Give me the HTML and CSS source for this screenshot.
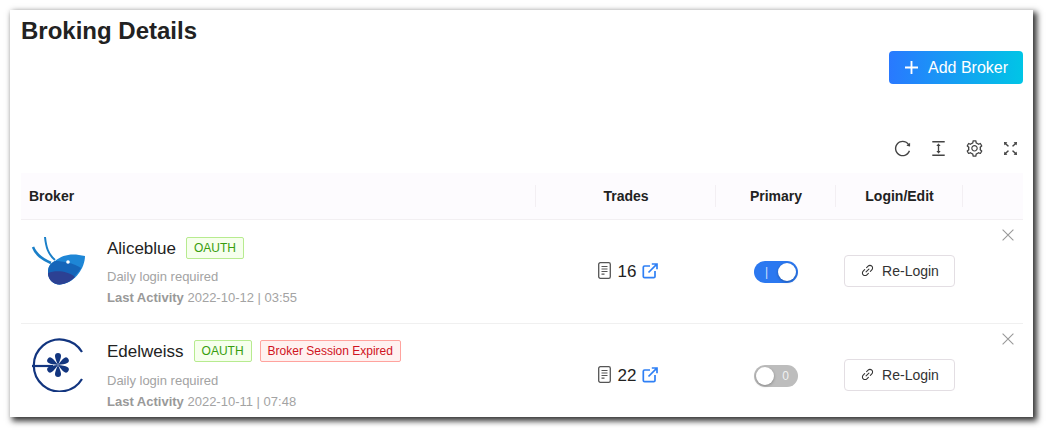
FILE: index.html
```html
<!DOCTYPE html>
<html lang="en">
<head>
    <meta charset="UTF-8">
    <meta name="viewport" content="width=device-width, initial-scale=1.0">
    <title>Broking Details</title>
    <link rel="stylesheet" href="styles.css">
</head>
<body>
    <svg class="sprites" aria-hidden="true">
        <symbol id="i-link" viewBox="0 0 1024 1024">
            <path d="M574 665.4a8.03 8.03 0 0 0-11.3 0L446.5 781.6c-53.8 53.8-144.6 59.5-204 0-59.5-59.5-53.8-150.2 0-204l116.2-116.2c3.1-3.1 3.1-8.2 0-11.3l-39.8-39.8a8.03 8.03 0 0 0-11.3 0L191.4 526.5c-84.6 84.6-84.6 221.5 0 306s221.5 84.6 306 0l116.2-116.2c3.1-3.1 3.1-8.2 0-11.3L574 665.4zm258.6-474c-84.6-84.6-221.5-84.6-306 0L410.3 307.6a8.03 8.03 0 0 0 0 11.3l39.7 39.7c3.1 3.1 8.2 3.1 11.3 0l116.2-116.2c53.8-53.8 144.6-59.5 204 0 59.5 59.5 53.8 150.2 0 204L665.3 562.6a8.03 8.03 0 0 0 0 11.3l39.8 39.8c3.1 3.1 8.2 3.1 11.3 0l116.2-116.2c84.5-84.6 84.5-221.5 0-306.1zM610.1 372.3a8.03 8.03 0 0 0-11.3 0L372.3 598.7a8.03 8.03 0 0 0 0 11.3l39.6 39.6c3.1 3.1 8.2 3.1 11.3 0l226.4-226.4c3.1-3.1 3.1-8.2 0-11.3l-39.5-39.6z"/>
        </symbol>
        <symbol id="i-doc" viewBox="0 0 13 17">
            <rect x=".7" y=".7" width="11.600" height="15.600" rx="1.600" fill="none" stroke="currentColor" stroke-width="1.300"/>
            <path d="M3.500 4.500h6M3.500 7h6M3.500 9.500h6M3.500 12.200h3" fill="none" stroke="currentColor" stroke-width="1.200"/>
        </symbol>
        <symbol id="i-open" viewBox="0 0 16 16">
            <path d="M8 3H2.600A1.300 1.300 0 0 0 1.300 4.300V13.400A1.300 1.300 0 0 0 2.600 14.700H11.700A1.300 1.300 0 0 0 13 13.400V8M6.500 9.500L14.600 1.400M9.800 1H15V6.200" fill="none" stroke="currentColor" stroke-width="1.700"/>
        </symbol>
        <symbol id="i-close" viewBox="0 0 12 12">
            <path d="M.6.600L11.400 11.400M11.400.600L.6 11.400" fill="none" stroke="currentColor" stroke-width="1.100"/>
        </symbol>
        <symbol id="i-petal" viewBox="0 0 60 60" overflow="visible">
            <path d="M31 33C29.500 29.500 28 26 28 24A3 3 0 0 1 34 24C34 26 32.500 29.500 31 33Z"/>
        </symbol>
    </svg>

    <div class="card">
        <h1>Broking Details</h1>

        <div class="actions">
            <button class="add-btn">
                <svg class="add-icon" viewBox="0 0 14 14"><path d="M7 0v14M0 7h14" stroke="#fff" stroke-width="2"/></svg>
                Add Broker
            </button>
        </div>

        <div class="toolbar">
            <svg class="tool" viewBox="0 0 1024 1024"><path d="M909.1 209.3l-56.4 44.1C775.8 155.1 656.2 92 521.9 92 290 92 102.3 279.5 102 511.5 101.7 743.7 289.8 932 521.9 932c181.3 0 335.8-115 394.6-276.1 1.5-4.2-.7-8.9-4.9-10.3l-56.7-19.5a8 8 0 0 0-10.1 4.8c-1.8 5-3.8 10-5.9 14.9-17.3 41-42.1 77.8-73.7 109.4A344.77 344.77 0 0 1 655.9 829c-42.3 17.9-87.4 27-133.8 27-46.5 0-91.5-9.1-133.8-27A341.5 341.5 0 0 1 279 755.2a342.16 342.16 0 0 1-73.7-109.4c-17.9-42.4-27-87.4-27-133.9s9.1-91.5 27-133.9c17.3-41 42.1-77.8 73.7-109.4 31.6-31.6 68.4-56.4 109.3-73.8 42.3-17.9 87.4-27 133.8-27 46.5 0 91.5 9.1 133.8 27a341.5 341.5 0 0 1 109.3 73.8c9.9 9.9 19.2 20.4 27.8 31.4l-60.2 47a8 8 0 0 0 3 14.1l175.6 43c5 1.2 9.9-2.6 9.9-7.7l.8-180.9c-.1-6.6-7.8-10.3-13-6.2z"/></svg>
            <svg class="tool" viewBox="0 0 1024 1024"><path d="M840 836H184c-4.4 0-8 3.6-8 8v60c0 4.4 3.6 8 8 8h656c4.4 0 8-3.6 8-8v-60c0-4.4-3.6-8-8-8zm0-724H184c-4.4 0-8 3.6-8 8v60c0 4.4 3.6 8 8 8h656c4.4 0 8-3.6 8-8v-60c0-4.4-3.6-8-8-8zM610.8 378c6 0 9.4-7 5.7-11.7L515.7 238.7a7.14 7.14 0 0 0-11.3 0L403.6 366.3a7.23 7.23 0 0 0 5.7 11.7H476v268h-62.8c-6 0-9.4 7-5.7 11.7l100.8 127.5c2.9 3.7 8.5 3.7 11.3 0l100.8-127.5c3.7-4.7.4-11.7-5.7-11.7H548V378h62.8z"/></svg>
            <svg class="tool" viewBox="0 0 1024 1024"><path d="M924.8 625.7l-65.5-56c3.1-19 4.7-38.4 4.7-57.8s-1.6-38.8-4.7-57.8l65.5-56a32.03 32.03 0 0 0 9.3-35.2l-.9-2.6a443.74 443.74 0 0 0-79.7-137.9l-1.8-2.1a32.12 32.12 0 0 0-35.1-9.5l-81.3 28.9c-30-24.6-63.5-44-99.7-57.6l-15.7-85a32.05 32.05 0 0 0-25.8-25.7l-2.7-.5c-52.1-9.4-106.9-9.4-159 0l-2.7.5a32.05 32.05 0 0 0-25.8 25.7l-15.8 85.4a351.86 351.86 0 0 0-99 57.4l-81.9-29.1a32 32 0 0 0-35.1 9.5l-1.8 2.1a446.02 446.02 0 0 0-79.7 137.9l-.9 2.6c-4.5 12.5-.8 26.5 9.3 35.2l66.3 56.6c-3.1 18.8-4.6 38-4.6 57.1 0 19.2 1.5 38.4 4.6 57.1L99 625.5a32.03 32.03 0 0 0-9.3 35.2l.9 2.6c18.1 50.4 44.9 96.9 79.7 137.9l1.8 2.1a32.12 32.12 0 0 0 35.1 9.5l81.9-29.1c29.8 24.5 63.1 43.9 99 57.4l15.8 85.4a32.05 32.05 0 0 0 25.8 25.7l2.7.5a449.4 449.4 0 0 0 159 0l2.7-.5a32.05 32.05 0 0 0 25.8-25.7l15.7-85a350 350 0 0 0 99.7-57.6l81.3 28.9a32 32 0 0 0 35.1-9.5l1.8-2.1c34.8-41.1 61.6-87.5 79.7-137.9l.9-2.6c4.5-12.3.8-26.3-9.3-35zM788.3 465.9c2.5 15.1 3.8 30.6 3.8 46.1s-1.3 31-3.8 46.1l-6.6 40.1 74.7 63.9a370.03 370.03 0 0 1-42.6 73.6L721 702.8l-31.4 25.8c-23.9 19.6-50.5 35-79.3 45.8l-38.1 14.3-17.9 97a377.5 377.5 0 0 1-85 0l-17.9-97.2-37.8-14.5c-28.5-10.8-55-26.2-78.7-45.7l-31.4-25.9-93.4 33.2c-17-22.9-31.2-47.6-42.6-73.6l75.5-64.5-6.5-40c-2.4-14.9-3.7-30.3-3.7-45.5 0-15.3 1.2-30.6 3.7-45.5l6.5-40-75.5-64.5c11.3-26.1 25.6-50.7 42.6-73.6l93.4 33.2 31.4-25.9c23.7-19.5 50.2-34.9 78.7-45.7l37.9-14.3 17.9-97.2c28.1-3.2 56.8-3.2 85 0l17.9 97 38.1 14.3c28.7 10.8 55.4 26.2 79.3 45.8l31.4 25.8 92.8-32.9c17 22.9 31.2 47.6 42.6 73.6L781.8 426l6.5 39.9zM512 326c-97.2 0-176 78.8-176 176s78.8 176 176 176 176-78.8 176-176-78.8-176-176-176zm79.2 255.2A111.6 111.6 0 0 1 512 614c-29.9 0-58-11.7-79.2-32.8A111.6 111.6 0 0 1 400 502c0-29.9 11.7-58 32.8-79.2C454 401.6 482.1 390 512 390c29.9 0 58 11.6 79.2 32.8A111.6 111.6 0 0 1 624 502c0 29.9-11.7 58-32.8 79.2z"/></svg>
            <svg class="tool" viewBox="0 0 1024 1024"><path d="M290 236.4l43.9-43.9a8.01 8.01 0 0 0-4.7-13.6L169 160c-5.1-.6-9.5 3.7-8.9 8.9L179 329.1c.8 6.6 8.9 9.4 13.6 4.7l43.7-43.7L370 423.7c3.1 3.1 8.2 3.1 11.3 0l42.4-42.3c3.1-3.1 3.1-8.2 0-11.3L290 236.4zm352.7 187.3c3.1 3.1 8.2 3.1 11.3 0l133.7-133.6 43.7 43.7a8.01 8.01 0 0 0 13.6-4.7L863.9 169c.6-5.1-3.7-9.5-8.9-8.9L694.8 179c-6.6.8-9.4 8.9-4.7 13.6l43.9 43.9L600.3 370a8.03 8.03 0 0 0 0 11.3l42.4 42.4zM845 694.9c-.8-6.6-8.9-9.4-13.6-4.7l-43.7 43.7L654 600.3a8.03 8.03 0 0 0-11.3 0l-42.4 42.3a8.03 8.03 0 0 0 0 11.3L734 787.6l-43.9 43.9a8.01 8.01 0 0 0 4.7 13.6L855 864c5.1.6 9.5-3.7 8.9-8.9L845 694.9zm-463.7-94.6a8.03 8.03 0 0 0-11.3 0L236.3 733.9l-43.7-43.7a8.01 8.01 0 0 0-13.6 4.7L160.1 855c-.6 5.1 3.7 9.5 8.9 8.9L329.2 845c6.6-.8 9.4-8.9 4.7-13.6L290 787.6 423.7 654c3.1-3.1 3.1-8.2 0-11.3l-42.4-42.4z"/></svg>
        </div>

        <div class="table">
            <div class="head">
                <div class="th th-broker">Broker</div>
                <div class="th">Trades</div>
                <div class="th">Primary</div>
                <div class="th">Login/Edit</div>
                <div class="th th-last"></div>
            </div>

            <div class="row row-first">
                <div class="broker">
                    <svg class="logo" viewBox="0 -4 60 60">
                        <path d="M18 5C19 15 21 22 28 28" fill="none" stroke="#1a7fc8" stroke-width="2"/>
                        <path d="M6 15C9 23 15 27 24 31" fill="none" stroke="#1a7fc8" stroke-width="2.500"/>
                        <path d="M21 40C21 34 24 31 28 29C36 22 46 21 58 24C58 36 48 50 36 52C27 54 21 48 21 40Z" fill="#1e86d6"/>
                        <path d="M21 40C21 34 24 31 28 29C36 29 46 31 54 36C49 44 43 50 36 52C27 54 21 48 21 40Z" fill="#1565b9"/>
                        <path d="M21 41C29 38 41 39 48 45C44 49 40 51 36 52C28 54 21 49 21 41Z" fill="#2c4193"/>
                        <circle cx="41" cy="30" r="1.800" fill="#fff"/>
                    </svg>
                    <div class="info">
                        <div class="name-line">
                            <span class="name">Aliceblue</span>
                            <span class="tag tag-green">OAUTH</span>
                        </div>
                        <div class="muted">Daily login required</div>
                        <div class="muted"><b>Last Activity</b> 2022-10-12 | 03:55</div>
                    </div>
                </div>
                <div class="trades">
                    <svg class="doc"><use href="#i-doc"/></svg>
                    <span>16</span>
                    <svg class="open"><use href="#i-open"/></svg>
                </div>
                <div class="primary">
                    <div class="switch switch-on"><span class="switch-label">|</span><span class="knob"></span></div>
                </div>
                <div class="login">
                    <button class="login-btn"><svg class="link"><use href="#i-link"/></svg>Re-Login</button>
                </div>
                <div class="remove"><svg class="close"><use href="#i-close"/></svg></div>
            </div>

            <div class="row">
                <div class="broker">
                    <svg class="logo" viewBox="0 0 60 60">
                        <path d="M55 20A26 26 0 1 0 55 47" fill="none" stroke="#12357f" stroke-width="2.200"/>
                        <path d="M5 34H26" stroke="#12357f" stroke-width="2.200"/>
                        <g fill="#12357f">
                            <use href="#i-petal" width="60" height="60"/>
                            <use href="#i-petal" width="60" height="60" transform="rotate(60 31 33)"/>
                            <use href="#i-petal" width="60" height="60" transform="rotate(120 31 33)"/>
                            <use href="#i-petal" width="60" height="60" transform="rotate(180 31 33)"/>
                            <use href="#i-petal" width="60" height="60" transform="rotate(240 31 33)"/>
                            <use href="#i-petal" width="60" height="60" transform="rotate(300 31 33)"/>
                        </g>
                    </svg>
                    <div class="info">
                        <div class="name-line">
                            <span class="name">Edelweiss</span>
                            <span class="tag tag-green">OAUTH</span>
                            <span class="tag tag-red">Broker Session Expired</span>
                        </div>
                        <div class="muted">Daily login required</div>
                        <div class="muted"><b>Last Activity</b> 2022-10-11 | 07:48</div>
                    </div>
                </div>
                <div class="trades">
                    <svg class="doc"><use href="#i-doc"/></svg>
                    <span>22</span>
                    <svg class="open"><use href="#i-open"/></svg>
                </div>
                <div class="primary">
                    <div class="switch switch-off"><span class="knob"></span><span class="switch-label">0</span></div>
                </div>
                <div class="login">
                    <button class="login-btn"><svg class="link"><use href="#i-link"/></svg>Re-Login</button>
                </div>
                <div class="remove"><svg class="close"><use href="#i-close"/></svg></div>
            </div>
        </div>
    </div>
</body>
</html>
```

FILE: styles.css
```css
* {
    margin: 0;
    padding: 0;
    box-sizing: border-box;
    font-family: "Liberation Sans", Arial, sans-serif;
}

body {
    background: #fff;
    padding: 10px 16px 16px 10px;
    height: 433px;
    overflow: hidden;
    color: #222;
}

.sprites {
    display: none;
}

.card {
    width: 1023px;
    height: 407px;
    padding: 6px 10px 0 11px;
    background: #fff;
    overflow: hidden;
    box-shadow: 3px 3px 6px 1px rgba(0, 0, 0, 0.8);
}

h1 {
    font-size: 24px;
    line-height: 30px;
    font-weight: 700;
    color: #222;
}

.actions {
    display: flex;
    justify-content: flex-end;
    margin-top: 5px;
}

.add-btn {
    display: flex;
    align-items: center;
    gap: 10px;
    width: 134px;
    height: 33px;
    padding-left: 16px;
    border: none;
    border-radius: 4px;
    background: linear-gradient(90deg, #2979ff, #00c5e6);
    color: #fff;
    font-size: 16px;
}

.add-icon {
    width: 13px;
    height: 13px;
}

.toolbar {
    display: flex;
    justify-content: flex-end;
    gap: 17px;
    margin-top: 55px;
    padding-right: 3px;
}

.tool {
    width: 19px;
    height: 19px;
    fill: #444;
}

.table {
    margin-top: 15px;
}

.head {
    display: grid;
    grid-template-columns: 515px 180px 120px 127px 60px;
    height: 47px;
    align-items: center;
    background: #fdfbfe;
    border-bottom: 1px solid #f2eff2;
}

.th {
    height: 22px;
    line-height: 22px;
    padding-left: 1px;
    font-size: 14px;
    font-weight: 700;
    text-align: center;
    border-right: 1px solid #f3eff3;
}

.th-broker {
    padding-left: 8px;
    text-align: left;
}

.th-last {
    border-right: none;
}

.row {
    display: grid;
    grid-template-columns: 515px 180px 120px 127px 60px;
    height: 104px;
    align-items: center;
    border-bottom: 1px solid #f0f0f0;
}

.broker {
    display: flex;
    align-items: flex-start;
    gap: 20px;
    align-self: start;
    padding: 8px 0 0 6px;
}

.logo {
    width: 60px;
    height: 60px;
    flex: none;
}

.info {
    padding-top: 7px;
}

.name-line {
    display: flex;
    align-items: center;
    gap: 8px;
    height: 24px;
    margin-bottom: 7px;
}

/* first row sits a pixel lower than the second in the table */
.row-first .name-line {
    margin-top: 1px;
    margin-bottom: 6px;
}

.name {
    font-size: 17px;
    margin: 2px 2px 0 0;
}

.tag {
    height: 22px;
    line-height: 20px;
    padding: 0 7px;
    border: 1px solid;
    border-radius: 2px;
    font-size: 12px;
}

.tag-green {
    color: #389e0d;
    background: #f6ffed;
    border-color: #b7eb8f;
}

.tag-red {
    color: #cf1322;
    background: #fff1f0;
    border-color: #ffa39e;
}

.muted {
    font-size: 13px;
    line-height: 21px;
    color: #a3a3a3;
}

.muted b {
    color: #999;
}

.trades {
    display: flex;
    justify-content: center;
    align-items: center;
    gap: 7px;
    padding-left: 4px;
    font-size: 17px;
}

.doc {
    width: 13px;
    height: 17px;
    color: #555;
    margin-bottom: 2px;
}

.open {
    width: 16px;
    height: 16px;
    color: #2f80f5;
    margin: 0 0 2px -1px;
}

.primary {
    display: flex;
    justify-content: center;
}

.switch {
    display: flex;
    align-items: center;
    justify-content: space-between;
    width: 44px;
    height: 22px;
    padding: 2px;
    border-radius: 11px;
    font-size: 12px;
    color: rgba(255, 255, 255, 0.8);
}

.switch-on {
    background: #2b78f0;
    padding-left: 11px;
}

.switch-off {
    background: #bdbdbd;
    padding-right: 9px;
}

.knob {
    width: 18px;
    height: 18px;
    border-radius: 50%;
    background: #fff;
    box-shadow: 0 1px 3px rgba(0, 0, 0, 0.3);
}

.login {
    display: flex;
    justify-content: center;
    margin-top: -2px;
}

.login-btn {
    display: flex;
    align-items: center;
    justify-content: center;
    gap: 7px;
    width: 111px;
    height: 32px;
    background: #fff;
    border: 1px solid #e3dee3;
    border-radius: 4px;
    font-size: 14px;
    color: #333;
}

.link {
    width: 15px;
    height: 15px;
    fill: #333;
}

.remove {
    align-self: start;
    display: flex;
    justify-content: flex-end;
    padding: 9px 9px 0 0;
}

.close {
    width: 12px;
    height: 12px;
    color: #999;
}
```
